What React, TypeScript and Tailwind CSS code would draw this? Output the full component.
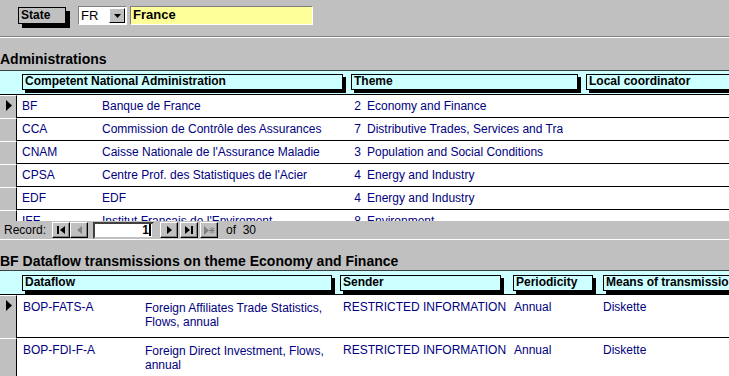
import React from "react";

const adminRows = [
  { code: "BF", name: "Banque de France", num: "2", theme: "Economy and Finance" },
  { code: "CCA", name: "Commission de Contrôle des Assurances", num: "7", theme: "Distributive Trades, Services and Transport" },
  { code: "CNAM", name: "Caisse Nationale de l'Assurance Maladie", num: "3", theme: "Population and Social Conditions" },
  { code: "CPSA", name: "Centre Prof. des Statistiques de l'Acier", num: "4", theme: "Energy and Industry" },
  { code: "EDF", name: "EDF", num: "4", theme: "Energy and Industry" },
  { code: "IFE", name: "Institut Français de l'Enviroment", num: "8", theme: "Environment" },
];

const flowRows = [
  { code: "BOP-FATS-A", desc: "Foreign Affiliates Trade Statistics, Flows, annual" },
  { code: "BOP-FDI-F-A", desc: "Foreign Direct Investment, Flows, annual" },
];

function HeaderBox({ label, width, className = "" }: { label: string; width: string; className?: string }) {
  return (
    <div className={`relative shrink-0 h-[19px] ${width} ${className}`}>
      <div className="absolute left-[3px] top-[3px] right-0 bottom-0 bg-black" />
      <div className="absolute left-0 top-0 right-[3px] bottom-[3px] bg-[#ccffff] border border-black pl-[2px] leading-[13px] font-bold text-black whitespace-nowrap overflow-hidden">
        {label}
      </div>
    </div>
  );
}

function Selector({ current, h }: { current?: boolean; h: string }) {
  return (
    <div className={`w-[17px] shrink-0 ${h} bg-[#c0c0c0] border-r border-black border-t border-t-white flex items-start pl-[6px] pt-[4px]`}>
      {current && (
        <svg width="6" height="11" viewBox="0 0 6 11">
          <path d="M0 0 L6 5.5 L0 11 Z" fill="#000" />
        </svg>
      )}
    </div>
  );
}

function NavButton({ children, disabled }: { children: React.ReactNode; disabled?: boolean }) {
  return (
    <div className={`w-[18px] h-[16px] bg-[#c0c0c0] border border-t-white border-l-white border-r-black border-b-black shadow-[inset_-1px_-1px_0_#808080] flex items-center justify-center ${disabled ? "text-[#808080]" : "text-black"}`}>
      {children}
    </div>
  );
}

export default function App() {
  return (
    <div className="w-[729px] h-[376px] overflow-hidden bg-[#c0c0c0] font-['Liberation_Sans',Arial,sans-serif] text-[12px] leading-none flex flex-col">
      {/* state selector */}
      <div className="h-[37px] shrink-0 flex items-start pt-[6px] pl-[18px] border-b border-[#808080]">
        <div className="relative w-[52px] h-[21px] mt-[1px]">
          <div className="absolute left-[4px] top-[4px] right-0 bottom-0 bg-black" />
          <div className="absolute left-0 top-0 right-[4px] bottom-[4px] bg-[#c0c0c0] border border-black font-bold pl-[2px] leading-[15px]">
            State
          </div>
        </div>
        <div className="ml-[8px] w-[49px] h-[19px] bg-white border border-t-[#808080] border-l-[#808080] border-r-white border-b-white flex items-center">
          <span className="pl-[2px] text-[13px]">FR</span>
          <div className="ml-auto mr-[1px] w-[16px] h-[15px] bg-[#c0c0c0] border border-t-white border-l-white border-r-black border-b-black flex items-center justify-center">
            <svg width="7" height="4" viewBox="0 0 7 4">
              <path d="M0 0 H7 L3.5 4 Z" fill="#000" />
            </svg>
          </div>
        </div>
        <div className="ml-[3px] w-[183px] h-[19px] bg-[#ffff99] border border-t-[#808080] border-l-[#808080] border-r-white border-b-white font-bold pl-[2px] leading-[16px] text-[13px]">
          France
        </div>
      </div>
      <div className="h-px bg-white shrink-0" />

      {/* Administrations */}
      <div className="h-[32px] shrink-0 flex items-end pb-[4px] text-[14px] font-bold text-black">Administrations</div>
      <div className="h-[25px] shrink-0 bg-[#ccffff] border-t border-[#404040] border-b border-b-black flex items-start pt-[3px] pl-[22px]">
        <HeaderBox label="Competent National Administration" width="w-[324px]" />
        <HeaderBox label="Theme" width="w-[230px]" className="ml-[5px]" />
        <HeaderBox label="Local coordinator" width="w-[160px]" className="ml-[5px]" />
      </div>
      <div className="h-[126px] shrink-0 overflow-hidden bg-white">
        {adminRows.map((r, i) => (
          <div key={r.code} className="h-[23px] flex border-b border-black text-[#000080]">
            <Selector current={i === 0} h="h-[23px]" />
            <div className="w-[85px] pl-[5px] pt-[5px]">{r.code}</div>
            <div className="w-[244px] pt-[5px] whitespace-nowrap">{r.name}</div>
            <div className="w-[15px] pt-[5px] text-right">{r.num}</div>
            <div className="w-[202px] pl-[6px] pt-[5px] whitespace-nowrap overflow-hidden">{r.theme}</div>
          </div>
        ))}
      </div>

      {/* record navigation */}
      <div className="h-[19px] shrink-0 flex items-center pl-[4px] border-b border-white">
        <span className="w-[48px]">Record:</span>
        <NavButton>
          <svg width="8" height="8" viewBox="0 0 8 8"><path d="M0 0 H2 V8 H0 Z M8 0 V8 L3 4 Z" fill="currentColor" /></svg>
        </NavButton>
        <NavButton disabled>
          <svg width="5" height="8" viewBox="0 0 5 8"><path d="M5 0 V8 L0 4 Z" fill="currentColor" /></svg>
        </NavButton>
        <div className="ml-[5px] w-[61px] h-[17px] bg-white border-2 border-t-[#404040] border-l-[#404040] border-r-[#c0c0c0] border-b-[#c0c0c0] flex items-center justify-end pr-[1px]">
          <span className="font-bold">1</span>
          <span className="w-[2px] h-[12px] bg-black" />
        </div>
        <div className="ml-[6px] flex gap-[2px]">
          <NavButton>
            <svg width="5" height="8" viewBox="0 0 5 8"><path d="M0 0 V8 L5 4 Z" fill="currentColor" /></svg>
          </NavButton>
          <NavButton>
            <svg width="8" height="8" viewBox="0 0 8 8"><path d="M0 0 V8 L5 4 Z M6 0 H8 V8 H6 Z" fill="currentColor" /></svg>
          </NavButton>
          <NavButton disabled>
            <svg width="11" height="9" viewBox="0 0 11 9"><path d="M0 0 V9 L5 4.5 Z" fill="currentColor" /><path d="M8 1 V8 M4.5 4.5 H11.5 M5.5 2 L10.5 7 M10.5 2 L5.5 7" stroke="currentColor" strokeWidth="1" /></svg>
          </NavButton>
        </div>
        <span className="ml-[8px]">of&nbsp; 30</span>
      </div>

      {/* Dataflow transmissions */}
      <div className="h-[30px] shrink-0 flex items-end pb-[2px] text-[14px] font-bold text-black whitespace-nowrap">
        BF Dataflow transmissions on theme Economy and Finance
      </div>
      <div className="h-[25px] shrink-0 bg-[#ccffff] border-t border-[#404040] border-b border-b-black flex items-start pt-[4px] pl-[22px]">
        <HeaderBox label="Dataflow" width="w-[313px]" />
        <HeaderBox label="Sender" width="w-[164px]" className="ml-[5px]" />
        <HeaderBox label="Periodicity" width="w-[83px]" className="ml-[9px]" />
        <HeaderBox label="Means of transmission" width="w-[140px]" className="ml-[7px]" />
      </div>
      <div className="flex-1 overflow-hidden bg-white">
        {flowRows.map((r, i) => (
          <div key={r.code} className="h-[43px] flex border-b border-black text-[#000080]">
            <Selector current={i === 0} h="h-[43px]" />
            <div className="w-[128px] pl-[6px] pt-[6px]">{r.code}</div>
            <div className="w-[198px] pt-[6px] leading-[14px]">{r.desc}</div>
            <div className="w-[171px] pt-[6px] whitespace-nowrap">RESTRICTED INFORMATION</div>
            <div className="w-[89px] pt-[6px]">Annual</div>
            <div className="pt-[6px]">Diskette</div>
          </div>
        ))}
      </div>
    </div>
  );
}
